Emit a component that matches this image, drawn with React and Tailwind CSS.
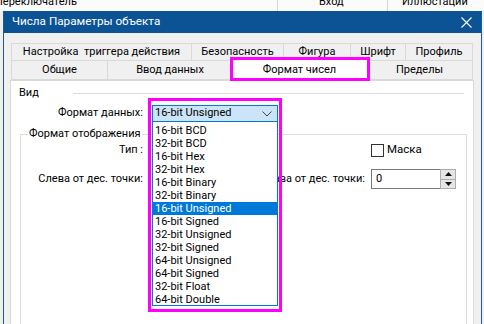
import React from "react";

const tabsTop = [
  { label: "Настройка  триггера действия", w: "w-[180px]" },
  { label: "Безопасность", w: "w-[92px]" },
  { label: "Фигура", w: "w-[67px]" },
  { label: "Шрифт", w: "w-[55px]" },
  { label: "Профиль", w: "w-[68px]" },
];

const formats = [
  "16-bit BCD",
  "32-bit BCD",
  "16-bit Hex",
  "32-bit Hex",
  "16-bit Binary",
  "32-bit Binary",
  "16-bit Unsigned",
  "16-bit Signed",
  "32-bit Unsigned",
  "32-bit Signed",
  "64-bit Unsigned",
  "64-bit Signed",
  "32-bit Float",
  "64-bit Double",
];

const Chevron = () => (
  <svg width="10" height="6" viewBox="0 0 10 6" className="mr-[5px]">
    <polyline points="0.5,0.5 5,5 9.5,0.5" fill="none" stroke="#444" strokeWidth="1" />
  </svg>
);

const App = () => {
  const selected = "16-bit Unsigned";

  return (
    <div className="relative w-[484px] h-[324px] overflow-hidden bg-[#f0f0f0] text-[11px] text-black font-['Roboto',sans-serif]">
      {/* app behind the dialog */}
      <div className="flex h-[11px] bg-[#fbfbfb] overflow-hidden leading-[16px]">
        <div className="w-[283px] border-r border-[#d6d6d6] -mt-[6px] -ml-[5px] whitespace-nowrap">Переключатель</div>
        <div className="w-[110px] border-r border-[#d6d6d6] -mt-[6px] pl-[41px]">Вход</div>
        <div className="flex-1 -mt-[6px] pl-[14px]">Иллюстации</div>
      </div>

      {/* dialog */}
      <div className="ml-[3px] w-[479px] h-[313px] border-x border-[#1d5c9c] bg-[#f0f0f0]">
        <div className="flex items-center justify-between h-[22px] bg-[#0b5394] text-white pl-[8px] pr-[9px]">
          <span className="text-[11.7px]">Числа Параметры объекта</span>
          <svg width="11" height="11" viewBox="0 0 11 11">
            <path d="M0.5 0.5 L10.5 10.5 M10.5 0.5 L0.5 10.5" stroke="#fff" strokeWidth="1.1" />
          </svg>
        </div>

        <div className="pt-[10px] pl-[6px]">
          {/* tab rows */}
          <div className="ml-[1px] w-[462px]">
            <div className="flex h-[18px]">
              {tabsTop.map((t) => (
                <div
                  key={t.label}
                  className={`${t.w} flex items-center justify-center border border-r-0 last:border-r border-[#d9d9d9] whitespace-pre`}
                >
                  {t.label}
                </div>
              ))}
            </div>
            <div className="flex h-[19px]">
              <div className="w-[96px] flex items-center justify-center border border-t-0 border-r-0 border-[#d9d9d9]">Общие</div>
              <div className="w-[125px] flex items-center justify-center border border-t-0 border-r-0 border-[#d9d9d9]">Ввод данных</div>
              <div className="relative z-10 w-[139px] -mx-[2px] -mt-[3px] h-[23px] flex items-center justify-center bg-white border border-b-0 border-[#d9d9d9]">
                Формат чисел
              </div>
              <div className="flex-1 flex items-center justify-center border border-t-0 border-l-0 border-[#d9d9d9]">Пределы</div>
            </div>
          </div>

          {/* panel */}
          <div className="w-[464px] h-[250px] bg-white border border-[#d9d9d9]">
            <div className="flex items-center h-[16px] mt-[4px]">
              <span className="w-[62px] pl-[8px]">Вид</span>
              <div className="flex-1 h-px bg-[#dcdcdc] mr-[9px]" />
            </div>

            <div className="flex items-center mt-[4px]">
              <span className="w-[132px] text-right">Формат данных:</span>
              <div className="ml-[9px] w-[126px] h-[17px] flex items-center justify-between bg-[#cce4f7] border border-[#0078d7] pl-[2px]">
                <span>16-bit Unsigned</span>
                <Chevron />
              </div>
            </div>

            <fieldset className="ml-[9px] mr-[6px] mt-[4px] h-[200px] border border-[#dcdcdc] pr-[10px]">
              <legend className="ml-[7px] px-[1px] leading-[16px]">Формат отображения</legend>
              <div className="grid grid-cols-[122px_1fr_85px]">
                <span className="h-[16px] flex items-center justify-end">Тип :</span>
                <span />
                <label className="flex items-center h-[16px]">
                  <span className="w-[13px] h-[13px] border border-[#333] bg-white" />
                  <span className="ml-[3px] text-[11.5px]">Маска</span>
                </label>

                <span className="mt-[11px] h-[20px] flex items-center justify-end whitespace-nowrap">Слева от дес. точки:</span>
                <span className="mt-[11px] h-[20px] flex items-center justify-end pr-[6px] whitespace-nowrap">Справа от дес. точки:</span>
                <div className="mt-[11px] h-[20px] flex">
                  <div className="flex-1 flex items-center border border-r-0 border-[#7a7a7a] pl-[4px]">0</div>
                  <div className="w-[16px] flex flex-col border border-[#adadad] bg-[#e5e5e5]">
                    <div className="flex-1 flex items-center justify-center border-b border-[#adadad]">
                      <svg width="7" height="4" viewBox="0 0 7 4"><polygon points="0,4 3.5,0 7,4" fill="#111" /></svg>
                    </div>
                    <div className="flex-1 flex items-center justify-center">
                      <svg width="7" height="4" viewBox="0 0 7 4"><polygon points="0,0 3.5,4 7,0" fill="#111" /></svg>
                    </div>
                  </div>
                </div>
              </div>
            </fieldset>
          </div>
        </div>
      </div>

      {/* open dropdown list */}
      <div className="absolute left-[152px] top-[121px] w-[126px] h-[185px] bg-white border border-[#0078d7] pt-[2px] z-20">
        {formats.map((f) => (
          <div
            key={f}
            className={`h-[13px] leading-[13px] pl-[2px] ${f === selected ? "bg-[#0078d7] text-white" : ""}`}
          >
            {f}
          </div>
        ))}
      </div>

      {/* annotation frames */}
      <div className="absolute left-[230px] top-[57px] w-[140px] h-[24px] border-[3px] border-[#ff00ff] z-30" />
      <div className="absolute left-[148px] top-[98px] w-[134px] h-[214px] border-[3px] border-[#ff00ff] z-30" />
    </div>
  );
};

export default App;
